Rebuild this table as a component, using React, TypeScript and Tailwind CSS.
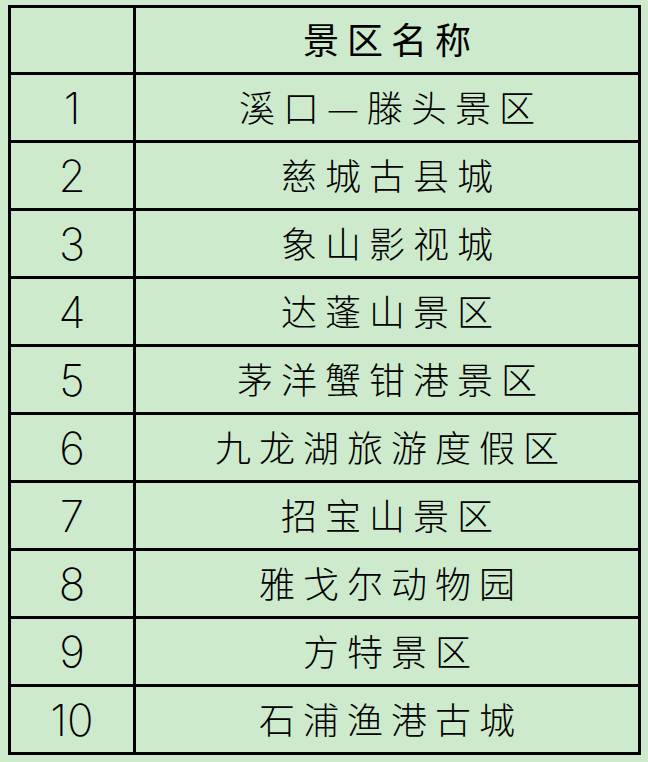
const rows = [
  '溪口—滕头景区',
  '慈城古县城',
  '象山影视城',
  '达蓬山景区',
  '茅洋蟹钳港景区',
  '九龙湖旅游度假区',
  '招宝山景区',
  '雅戈尔动物园',
  '方特景区',
  '石浦渔港古城',
];

export default function App() {
  return (
    <div className="min-h-screen w-[648px] h-[762px] bg-[#cdebcc] pl-[8px] pt-[5px]">
      <table className="w-[633px] border-collapse border-[3px] border-black text-black">
        <colgroup>
          <col className="w-[125px]" />
          <col />
        </colgroup>
        <thead>
          <tr className="h-[67px]">
            <th className="border-[3px] border-black" />
            <th className="border-[3px] border-black pb-[4px] pl-[8px] text-center text-[36px] font-normal leading-none tracking-[8px] [font-family:'Noto_Sans_CJK_SC',sans-serif]">
              景区名称
            </th>
          </tr>
        </thead>
        <tbody>
          {rows.map((name, i) => (
            <tr key={name} className="h-[68px]">
              <td className="border-[3px] border-black text-center text-[44px] font-extralight leading-none [font-family:Inter,'Liberation_Sans',sans-serif]">
                {i + 1}
              </td>
              <td className="border-[3px] border-black pb-[3px] pl-[8px] text-center text-[36px] font-light leading-none tracking-[8px] [font-family:'Noto_Sans_CJK_SC',sans-serif]">
                {name}
              </td>
            </tr>
          ))}
        </tbody>
      </table>
    </div>
  );
}
